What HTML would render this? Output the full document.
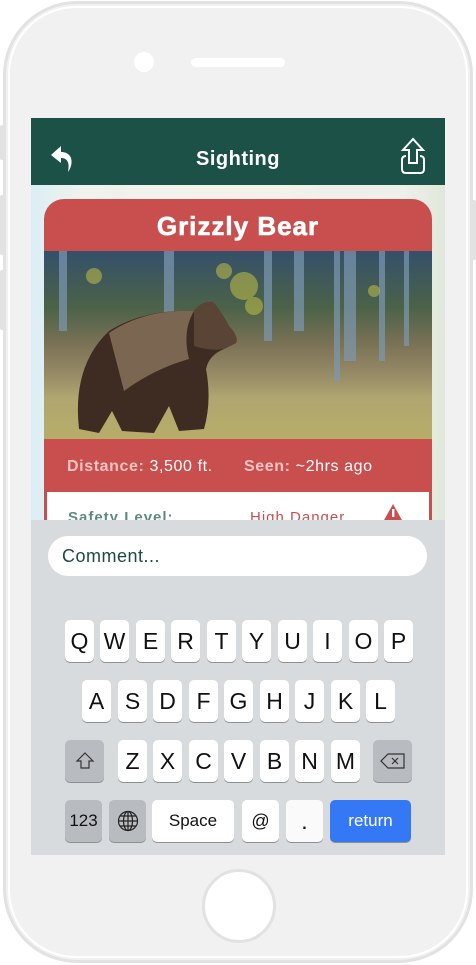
<!DOCTYPE html>
<html><head><style>
*{margin:0;padding:0;box-sizing:border-box}
body{width:476px;height:965px;background:#fff;position:relative;overflow:hidden;font-family:"Liberation Sans",sans-serif}
.phone{position:absolute;left:3px;top:1px;width:470px;height:962px;border:3px solid #e2e2e2;border-radius:74px;background:#f1f1f1}
.phone2{position:absolute;left:8px;top:6px;width:460px;height:952px;border:2px solid #fff;border-radius:68px}
.btn{position:absolute;background:#e2e2e2;width:4px;border-radius:2px}
.screen{position:absolute;left:31px;top:118px;width:414px;height:737px;overflow:hidden;background:#eef2ee}
.hdr{position:absolute;left:0;top:0;width:414px;height:67px;background:#1c5148;color:#fff;font-weight:bold;font-size:20px;text-align:center;line-height:82px;letter-spacing:.5px}
.map{position:absolute;left:0;top:67px;width:414px;height:340px;background:linear-gradient(90deg,#dbeef6 0,#eef3ec 12%,#f3f1ea 50%,#eef0ea 90%,#e0e8da 100%)}
.card{position:absolute;left:13px;top:81px;width:388px;height:340px;border-radius:20px 20px 0 0;overflow:hidden;background:#c94f4f}
.title{height:52px;color:#fff;font-weight:bold;font-size:26px;text-align:center;line-height:54px;letter-spacing:1px;-webkit-text-stroke:.6px #fff}
.info{position:absolute;top:240px;left:0;width:388px;height:54px;color:#fff;font-size:16px;line-height:56px;letter-spacing:.6px}
.info b{color:#f7c3c3}
.panel{position:absolute;top:293px;left:3px;width:382px;height:60px;background:#fff;font-size:15px;letter-spacing:1px}
.kb{position:absolute;left:0;top:402px;width:414px;height:335px;background:#d8dbde}
.input{position:absolute;left:17px;top:16px;width:379px;height:40px;background:#fff;border-radius:20px;font-size:18px;color:#1c4a42;line-height:41px;padding-left:14px;letter-spacing:.5px}
.k{position:absolute;width:29px;height:42px;background:#fff;border-radius:5px;box-shadow:0 1px 0 #8d9093;font-size:23px;color:#111;text-align:center;line-height:42px;font-family:"Liberation Sans",sans-serif}
.g{background:#b8bcc1}
</style></head><body>
<div class="phone"></div><div class="phone2"></div>
<div class="btn" style="left:0;top:125px;height:35px"></div>
<div class="btn" style="left:0;top:195px;height:60px"></div>
<div class="btn" style="left:0;top:270px;height:60px"></div>
<div class="btn" style="left:472px;top:200px;height:60px"></div>
<div style="position:absolute;left:134px;top:52px;width:20px;height:20px;border-radius:50%;background:#fff"></div>
<div style="position:absolute;left:191px;top:58px;width:94px;height:9px;border-radius:5px;background:#fff"></div>
<div style="position:absolute;left:202px;top:869px;width:74px;height:74px;border-radius:50%;background:#fff;border:3px solid #e2e2e2"></div>
<div class="screen">
 <div class="map"></div>
 <div class="hdr">Sighting
  <svg style="position:absolute;left:18px;top:26px" width="26" height="30" viewBox="0 0 26 30"><path d="M12 2 L2 11 L12 19 L12 14 C18 14 21 18 19 28 C25 20 24 8 12 8 Z" fill="#fff"/></svg>
  <svg style="position:absolute;left:369px;top:19px" width="26" height="38" viewBox="0 0 26 38"><path d="M13 2 L3 13 L9 13 L9 26 L17 26 L17 13 L23 13 Z M6 19 Q2 19 2 23 L2 32 Q2 36 6 36 L20 36 Q24 36 24 32 L24 23 Q24 19 20 19" fill="none" stroke="#fff" stroke-width="2"/></svg>
 </div>
 <div class="card">
  <div class="title">Grizzly Bear</div>
  <svg width="388" height="188" viewBox="0 0 388 188" style="display:block">
   <defs><linearGradient id="bg" x1="0" y1="0" x2="0" y2="1"><stop offset="0" stop-color="#34506a"/><stop offset=".3" stop-color="#4b6248"/><stop offset=".5" stop-color="#7c7256"/><stop offset=".68" stop-color="#9a8f68"/><stop offset=".78" stop-color="#b0a670"/><stop offset="1" stop-color="#b7ad68"/></linearGradient></defs>
   <rect width="388" height="188" fill="url(#bg)"/>
   <g fill="#7d99b3" opacity=".7"><rect x="15" y="0" width="8" height="80"/><rect x="120" y="0" width="10" height="70"/><rect x="250" y="0" width="10" height="80"/><rect x="290" y="0" width="6" height="130"/><rect x="300" y="0" width="12" height="110"/><rect x="335" y="0" width="6" height="110"/><rect x="360" y="0" width="5" height="95"/><rect x="220" y="0" width="8" height="90"/></g>
   <g fill="#c4c046" opacity=".55"><circle cx="200" cy="35" r="14"/><circle cx="210" cy="55" r="9"/><circle cx="330" cy="40" r="6"/><circle cx="50" cy="25" r="8"/><circle cx="180" cy="20" r="8"/></g>
   <path d="M35 178 Q28 115 65 80 Q100 58 150 60 Q160 48 170 52 Q178 62 185 75 Q195 86 192 92 L180 98 Q165 104 162 118 Q168 150 160 178 L135 180 L125 155 L110 182 L78 180 L68 160 L55 182 Z" fill="#3e2c22"/>
   <path d="M65 82 Q100 58 150 60 Q138 80 145 108 Q110 118 80 140 Z" fill="#86715a" opacity=".85"/>
   <path d="M150 60 Q160 48 170 52 Q178 62 185 75 Q195 86 192 92 L180 98 Q165 100 150 95 Z" fill="#5a4436"/>
  </svg>
  <div class="info"><span style="position:absolute;left:23px"><b>Distance:</b> 3,500 ft.</span><span style="position:absolute;left:200px"><b>Seen:</b> ~2hrs ago</span></div>
  <div class="panel"><span style="position:absolute;left:21px;top:17px;color:#5f8a80;font-weight:bold">Safety Level:</span><span style="position:absolute;left:203px;top:17px;color:#c94f4f">High Danger</span>
   <svg style="position:absolute;left:335px;top:11px" width="22" height="20"><path d="M11 1 L21 19 L1 19 Z" fill="#c94f4f"/><rect x="10" y="6" width="2.4" height="8" fill="#fff"/></svg></div>
 </div>
 <div class="kb">
  <div class="input">Comment...</div>
  <div class="k" style="left:34px;top:100px">Q</div><div class="k" style="left:69px;top:100px">W</div><div class="k" style="left:105px;top:100px">E</div><div class="k" style="left:140px;top:100px">R</div><div class="k" style="left:176px;top:100px">T</div><div class="k" style="left:211px;top:100px">Y</div><div class="k" style="left:247px;top:100px">U</div><div class="k" style="left:282px;top:100px">I</div><div class="k" style="left:318px;top:100px">O</div><div class="k" style="left:353px;top:100px">P</div>
  <div class="k" style="left:51px;top:160px">A</div><div class="k" style="left:87px;top:160px">S</div><div class="k" style="left:122px;top:160px">D</div><div class="k" style="left:158px;top:160px">F</div><div class="k" style="left:193px;top:160px">G</div><div class="k" style="left:229px;top:160px">H</div><div class="k" style="left:264px;top:160px">J</div><div class="k" style="left:300px;top:160px">K</div><div class="k" style="left:335px;top:160px">L</div>
  <div class="k g" style="left:34px;top:220px;width:39px"><svg width="20" height="20" viewBox="0 0 20 20" style="margin-top:11px"><path d="M10 2 L18 10 L14 10 L14 17 L6 17 L6 10 L2 10 Z" fill="none" stroke="#333" stroke-width="1.2"/></svg></div>
  <div class="k" style="left:87px;top:220px">Z</div><div class="k" style="left:122px;top:220px">X</div><div class="k" style="left:158px;top:220px">C</div><div class="k" style="left:193px;top:220px">V</div><div class="k" style="left:229px;top:220px">B</div><div class="k" style="left:264px;top:220px">N</div><div class="k" style="left:300px;top:220px">M</div>
  <div class="k g" style="left:342px;top:220px;width:39px"><svg width="26" height="18" viewBox="0 0 26 18" style="margin-top:12px"><path d="M8 2 L24 2 L24 16 L8 16 L1 9 Z" fill="none" stroke="#333" stroke-width="1.2"/><path d="M12 6 L18 12 M18 6 L12 12" stroke="#333" stroke-width="1.2"/></svg></div>
  <div class="k g" style="left:34px;top:280px;width:37px;font-size:17px">123</div>
  <div class="k g" style="left:78px;top:280px;width:37px"><svg width="22" height="22" viewBox="0 0 22 22" style="margin-top:10px" fill="none" stroke="#222" stroke-width="1.2"><circle cx="11" cy="11" r="9.5"/><ellipse cx="11" cy="11" rx="4.5" ry="9.5"/><path d="M11 1.5V20.5M1.5 11H20.5M3 6H19M3 16H19"/></svg></div>
  <div class="k" style="left:121px;top:280px;width:82px;font-size:17px">Space</div>
  <div class="k" style="left:211px;top:280px;width:37px;font-size:18px">@</div>
  <div class="k" style="left:255px;top:280px;width:37px;background:#fafafa">.</div>
  <div class="k" style="left:299px;top:280px;width:81px;background:#3478f6;color:#fff;font-size:17px">return</div>
 </div>
</div>
</body></html>
